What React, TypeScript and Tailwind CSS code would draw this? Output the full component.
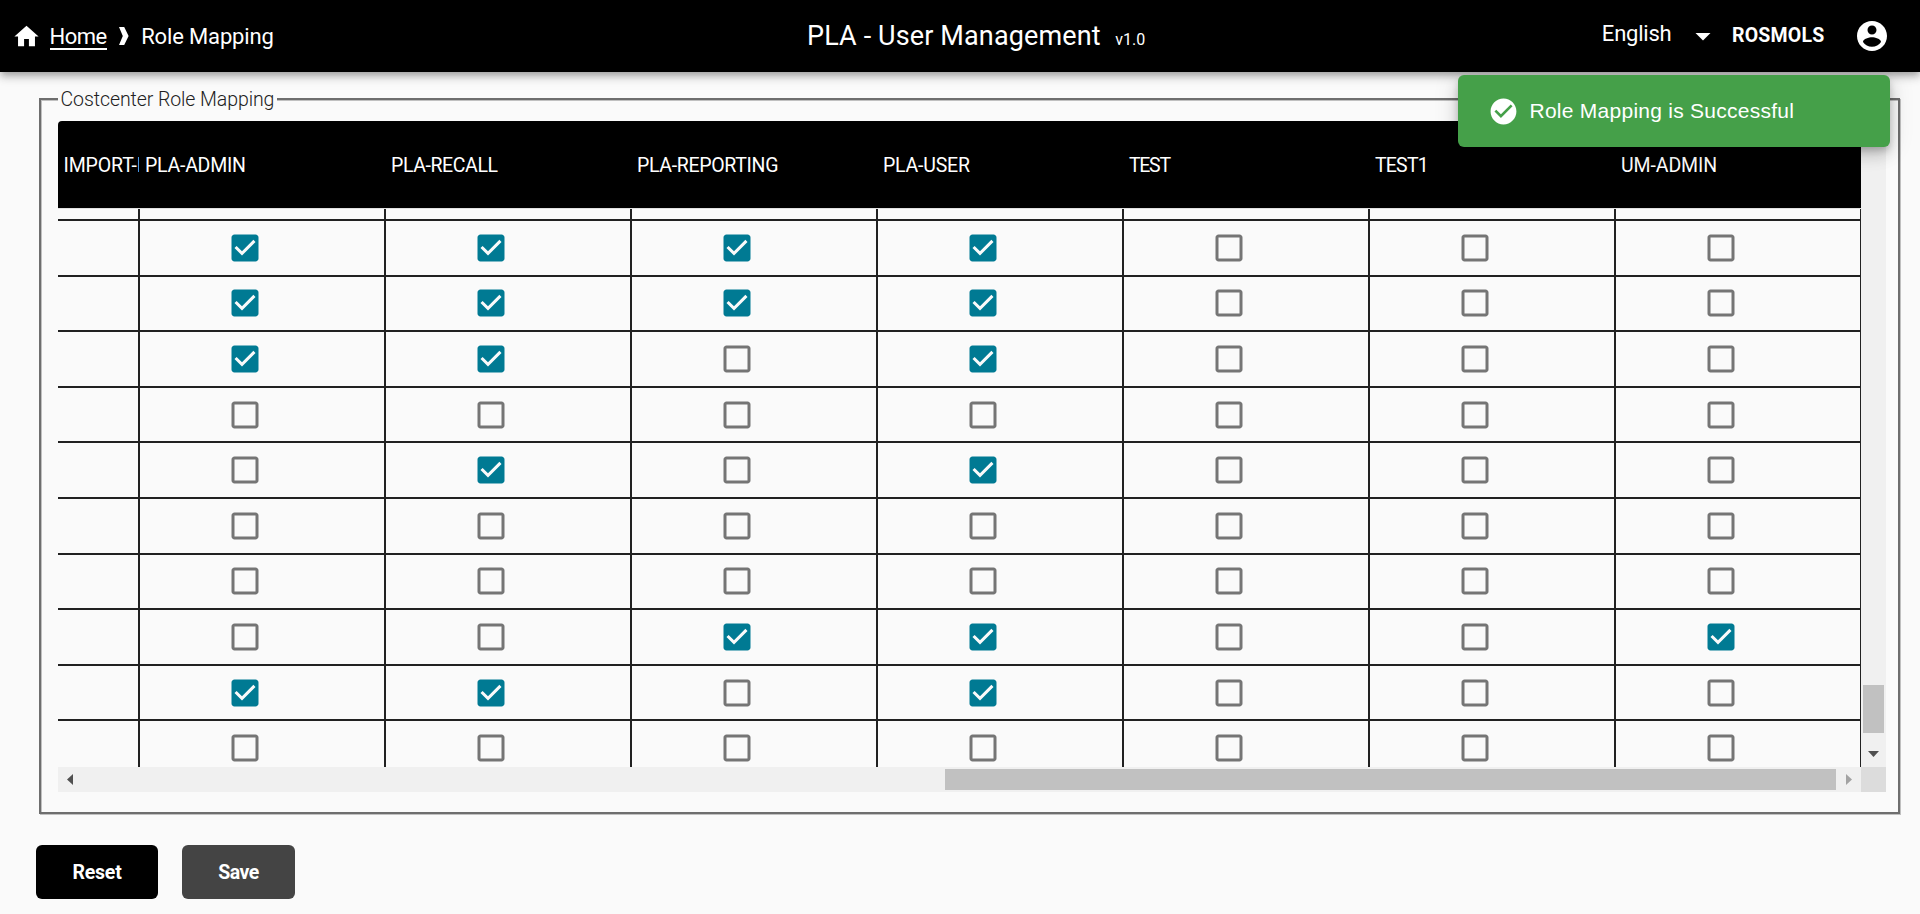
const ROLES = [
  { name: 'PLA-ADMIN', tracking: 'tracking-[-0.24px]' },
  { name: 'PLA-RECALL', tracking: 'tracking-[-0.4px]' },
  { name: 'PLA-REPORTING', tracking: 'tracking-[-0.32px]' },
  { name: 'PLA-USER', tracking: 'tracking-[-0.2px]' },
  { name: 'TEST', tracking: 'tracking-[-1.3px]' },
  { name: 'TEST1', tracking: 'tracking-[-0.8px]' },
  { name: 'UM-ADMIN', tracking: 'tracking-[-0.1px]' },
];

const ROWS = [
  { checks: [1, 1, 1, 1, 0, 0, 0], size: 'h-[56px] pt-[9px]' },
  { checks: [1, 1, 1, 1, 0, 0, 0], size: 'h-[55px] pt-[8px]' },
  { checks: [1, 1, 0, 1, 0, 0, 0], size: 'h-[56px] pt-[9px]' },
  { checks: [0, 0, 0, 0, 0, 0, 0], size: 'h-[55px] pt-[9px]' },
  { checks: [0, 1, 0, 1, 0, 0, 0], size: 'h-[56px] pt-[9px]' },
  { checks: [0, 0, 0, 0, 0, 0, 0], size: 'h-[56px] pt-[9px]' },
  { checks: [0, 0, 0, 0, 0, 0, 0], size: 'h-[55px] pt-[8px]' },
  { checks: [0, 0, 1, 1, 0, 0, 1], size: 'h-[56px] pt-[9px]' },
  { checks: [1, 1, 0, 1, 0, 0, 0], size: 'h-[55px] pt-[9px]' },
  { checks: [0, 0, 0, 0, 0, 0, 0], size: 'h-[56px] pt-[9px]' },
];

const ICONS = {
  home: 'M10 20v-6h4v6h5v-8h3L12 3 2 12h3v8z',
  dropDown: 'M7 10l5 5 5-5z',
  account:
    'M12 2C6.48 2 2 6.48 2 12s4.48 10 10 10 10-4.48 10-10S17.52 2 12 2zm0 3c1.66 0 3 1.34 3 3s-1.34 3-3 3-3-1.34-3-3 1.34-3 3-3zm0 14.2c-2.5 0-4.71-1.28-6-3.22.03-1.99 4-3.08 6-3.08 1.99 0 5.97 1.09 6 3.08-1.29 1.94-3.5 3.22-6 3.22z',
  success: 'M12 2C6.5 2 2 6.5 2 12s4.5 10 10 10 10-4.5 10-10S17.5 2 12 2zM10 17l-5-5 1.41-1.41L10 14.17l7.59-7.59L19 8l-9 9z',
  unchecked:
    'M19 5v14H5V5h14m0-2H5c-1.1 0-2 .9-2 2v14c0 1.1.9 2 2 2h14c1.1 0 2-.9 2-2V5c0-1.1-.9-2-2-2z',
  checked:
    'M19 3H5c-1.11 0-2 .9-2 2v14c0 1.1.89 2 2 2h14c1.11 0 2-.9 2-2V5c0-1.1-.89-2-2-2zm-9 14l-5-5 1.41-1.41L10 14.17l7.59-7.59L19 8l-9 9z',
};

function Icon({ name, className }: { name: keyof typeof ICONS; className: string }) {
  return (
    <svg viewBox="0 0 24 24" className={`block shrink-0 fill-current ${className}`}>
      <path d={ICONS[name]} />
    </svg>
  );
}

function Header() {
  return (
    <header className="relative z-10 flex h-[72px] items-center bg-black text-white shadow-[0_3px_6px_-1.5px_rgba(0,0,0,0.2),0_6px_7.5px_0_rgba(0,0,0,0.14),0_1.5px_15px_0_rgba(0,0,0,0.12)]">
      <nav className="flex w-[807px] items-center pl-3 text-[22px]">
        <Icon name="home" className="size-[29px]" />
        <a className="mb-px ml-[8.5px] h-[29px] border-b-2 border-white leading-[31px] tracking-[-0.5px]">Home</a>
        <svg width="10" height="18" viewBox="0 0 10 18" className="ml-[12.5px] block fill-white">
          <path d="M0 0H5.2L9.6 9L5.2 18H0L3.8 9Z" />
        </svg>
        <span className="ml-3 tracking-[-0.15px]">Role Mapping</span>
      </nav>
      <div className="flex items-baseline pt-px whitespace-nowrap">
        <h1 className="text-[27px] tracking-[0.13px]">PLA - User Management</h1>
        <span className="ml-[14.5px] text-base">v1.0</span>
      </div>
      <div className="ml-auto flex items-center pr-[30px]">
        <span className="pb-1.5 text-[22px] tracking-[-0.23px]">English</span>
        <Icon name="dropDown" className="ml-[14px] size-9" />
        <span className="ml-[10.5px] text-[19.5px] font-bold tracking-[0.22px]">ROSMOLS</span>
        <Icon name="account" className="ml-[29.5px] size-9" />
      </div>
    </header>
  );
}

function Toast() {
  return (
    <div className="absolute top-[75px] left-[1458px] z-20 flex h-[72px] w-[432px] items-center rounded-md bg-[#45a049] pl-[29.5px] text-white shadow-[0_4.5px_7.5px_-1.5px_rgba(0,0,0,0.2),0_9px_15px_0_rgba(0,0,0,0.14),0_1.5px_27px_0_rgba(0,0,0,0.12)]">
      <Icon name="success" className="size-[31px]" />
      <span className="ml-[11px] font-['Liberation_Sans',sans-serif] text-[21px] tracking-[0.26px]">Role Mapping is Successful</span>
    </div>
  );
}

function RoleTable() {
  return (
    <div className="w-[1803px] overflow-hidden">
      <div className="flex h-[87px] items-center rounded-tl-[4px] bg-black pt-0.5 text-[19.5px] whitespace-nowrap text-white">
        <div className="mr-px w-[81px] shrink-0 overflow-hidden pl-[5.5px] tracking-[-0.12px]">IMPORT-I</div>
        {ROLES.map((role) => (
          <div key={role.name} className={`w-[246px] shrink-0 pl-[5px] ${role.tracking}`}>
            {role.name}
          </div>
        ))}
      </div>
      <div className="h-px bg-[#e0e0e0]" />
      <div className="h-[558px] w-[1804px] overflow-hidden">
        <div className="flex h-2.5">
          <div className="w-[82px] shrink-0 border-r-2 border-[#212121]" />
          {ROLES.map((role) => (
            <div key={role.name} className="w-[246px] shrink-0 border-r-2 border-[#212121]" />
          ))}
        </div>
        {ROWS.map((row, index) => (
          <div key={index} className="flex">
            <div className="w-[82px] shrink-0 border-t-2 border-r-2 border-[#212121]" />
            {row.checks.map((checked, column) => (
              <div key={column} className={`w-[246px] shrink-0 border-t-2 border-r-2 border-[#212121] pl-[87px] ${row.size}`}>
                <Icon
                  name={checked ? 'checked' : 'unchecked'}
                  className={checked ? 'size-9 text-[#007a93]' : 'size-9 text-[#757575]'}
                />
              </div>
            ))}
          </div>
        ))}
      </div>
    </div>
  );
}

function VerticalScrollbar() {
  return (
    <div className="flex h-[646px] w-[25px] flex-col items-center bg-[#f0f0f0] pt-[564px]">
      <div className="h-12 w-[21px] bg-[#c1c1c1]" />
      <svg width="11" height="6" className="mt-[18px] block fill-[#505050]">
        <path d="M0 0H11L5.5 6Z" />
      </svg>
    </div>
  );
}

function HorizontalScrollbar() {
  return (
    <div className="flex h-[25px] bg-[#f0f0f0]">
      <div className="flex w-[1803px] items-center pl-[9px]">
        <svg width="6" height="11" className="block fill-[#505050]">
          <path d="M6 0V11L0 5.5Z" />
        </svg>
        <div className="ml-[872px] h-[21px] w-[891px] bg-[#c1c1c1]" />
        <svg width="6" height="11" className="ml-2.5 block fill-[#a3a3a3]">
          <path d="M0 0V11L6 5.5Z" />
        </svg>
      </div>
      <div className="w-[25px] bg-[#dcdcdc]" />
    </div>
  );
}

export default function App() {
  return (
    <div className="relative h-[914px] w-[1920px] overflow-hidden bg-[#fafafa] font-[Roboto,sans-serif]">
      <Header />
      <Toast />
      <main>
        <fieldset className="mt-[15px] ml-[39px] h-[727px] w-[1861px] border-2 border-[#6e6e6e] pt-2.5 pl-[17px] shadow-[1px_1px_0_#c0c0c0,inset_1px_1px_0_#c0c0c0]">
          <legend className="h-6 w-[219px] bg-[#fafafa] pl-[2.5px] text-[19.5px] leading-[26px] font-light tracking-[-0.08px] whitespace-nowrap text-[#212121]">
            Costcenter Role Mapping
          </legend>
          <div className="flex">
            <RoleTable />
            <VerticalScrollbar />
          </div>
          <div className="w-[1828px]">
            <HorizontalScrollbar />
          </div>
        </fieldset>
        <div className="mt-[31px] flex gap-6 pl-9 text-[19.5px] font-bold text-white">
          <button className="h-[54px] w-[122px] rounded-md bg-black pt-px tracking-[-0.24px]">Reset</button>
          <button className="h-[54px] w-[113px] rounded-md bg-[#444444] pt-px tracking-[-0.5px]">Save</button>
        </div>
      </main>
    </div>
  );
}
